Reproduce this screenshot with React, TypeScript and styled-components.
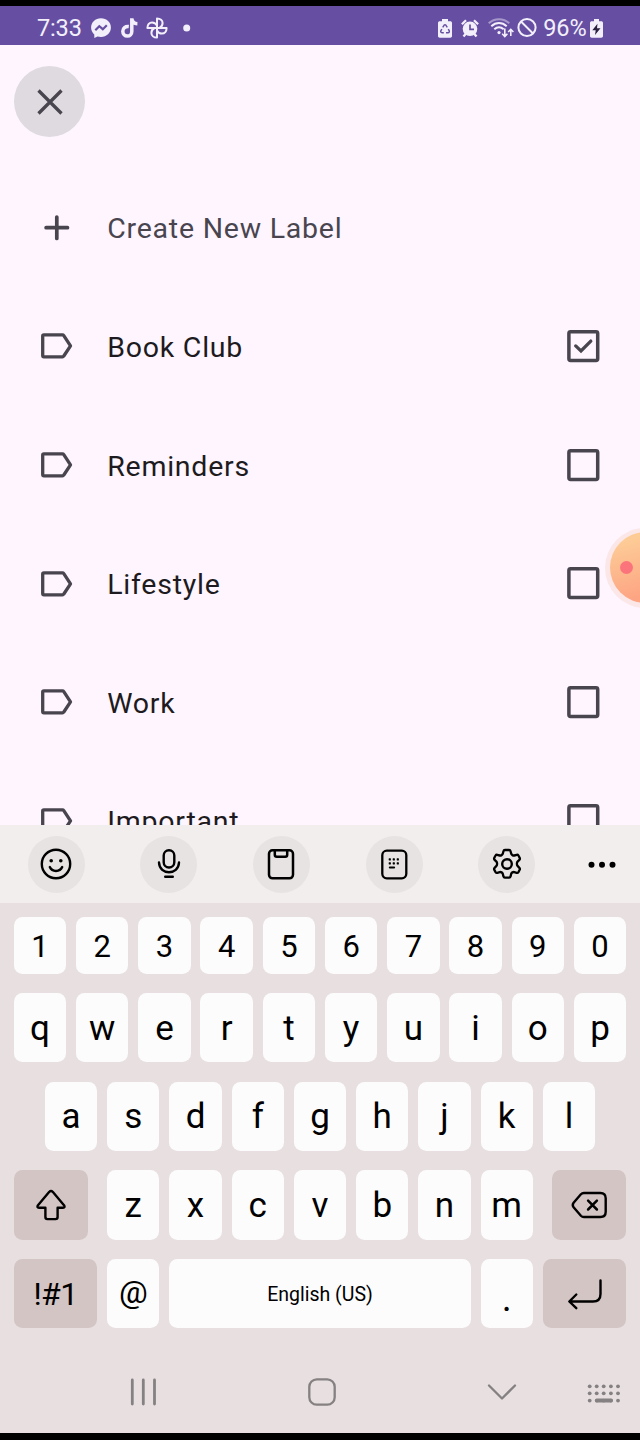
import React from "react";
import styled, { createGlobalStyle } from "styled-components";

const GlobalStyle = createGlobalStyle`
  * { box-sizing: border-box; }
  body { margin: 0; background: #000; }
  svg { display: block; flex: none; overflow: visible; }
`;

const Phone = styled.div`
  width: 640px;
  height: 1440px;
  padding: 6px 0 7px;
  display: flex;
  flex-direction: column;
  background: #000;
  font-family: Roboto, "Liberation Sans", sans-serif;
  overflow: hidden;
`;

const StatusBar = styled.header`
  height: 39px;
  flex: none;
  padding: 5px 36.7px 0 37px;
  display: flex;
  align-items: center;
  justify-content: space-between;
  background: #664fa3;
  color: #f3effa;
`;

const StatusGroup = styled.div`
  display: flex;
  align-items: center;
`;

const Space = styled.span<{ $w: number }>`
  width: ${(p) => p.$w}px;
`;

const StatusText = styled.span<{ $width: number }>`
  width: ${(p) => p.$width}px;
  font-size: 23.5px;
  line-height: 28px;
  letter-spacing: -0.15px;
  white-space: nowrap;
`;

const Screen = styled.main`
  position: relative;
  height: 780px;
  flex: none;
  background: #fef5ff;
  overflow: hidden;
`;

const TopBar = styled.div`
  height: 123.6px;
  padding: 21.2px 14.3px;
`;

const CloseButton = styled.button`
  width: 71px;
  height: 71px;
  padding: 0;
  border: 0;
  border-radius: 50%;
  display: grid;
  place-items: center;
  background: #dedadf;
`;

const Row = styled.div`
  height: 118.6px;
  padding: 0 40px;
  display: flex;
  align-items: center;
`;

const RowIcon = styled.div`
  width: 67.2px;
  display: flex;
`;

const RowText = styled.span<{ $muted?: boolean }>`
  flex: 1;
  padding-top: 3px;
  font-size: 28.5px;
  line-height: 42px;
  letter-spacing: 0.77px;
  color: ${(p) => (p.$muted ? "#49454f" : "#1d1b20")};
`;

const Bubble = styled.div`
  position: absolute;
  left: 605px;
  top: 482.5px;
  width: 80px;
  height: 80px;
  border-radius: 50%;
  background: #fbe7e8;
  padding: 4.5px;
`;

const BubbleFace = styled.div`
  height: 100%;
  border-radius: 50%;
  background: linear-gradient(165deg, #fdcb96 15%, #fda583 80%);
  display: flex;
  align-items: center;
  padding-left: 10.7px;
`;

const BubbleDot = styled.span`
  width: 13px;
  height: 13px;
  border-radius: 50%;
  background: #fb747c;
`;

const Toolbar = styled.div`
  height: 78px;
  flex: none;
  padding: 0 24.5px 0 27.8px;
  display: flex;
  align-items: center;
  background: #f3eeee;
`;

const ToolButton = styled.button`
  width: 57px;
  height: 57px;
  flex: none;
  margin: 0;
  padding: 0;
  border: 0;
  border-radius: 50%;
  display: grid;
  place-items: center;
  background: #e8e3e3;
  color: #000;

  & + & {
    margin-left: 55.6px;
  }
`;

const More = styled.svg`
  margin-left: auto;
`;

const Keyboard = styled.div`
  height: 530px;
  flex: none;
  padding: 14px 13.7px 0;
  display: flex;
  flex-direction: column;
  background: #e8dfe0;
`;

const KeyRow = styled.div<{ $h?: number }>`
  height: ${(p) => p.$h ?? 69.3}px;
  margin-bottom: 19.3px;
  flex: none;
  display: flex;
  justify-content: center;
  gap: 9.85px;
`;

const Key = styled.button<{ $w?: number; $dark?: boolean; $size?: number; $drop?: number; $lift?: number; $track?: number }>`
  width: ${(p) => p.$w ?? 52.4}px;
  height: 100%;
  padding: ${(p) => p.$drop ?? 0}px 0 ${(p) => p.$lift ?? 0}px;
  border: 0;
  border-radius: 8.5px;
  display: flex;
  align-items: center;
  justify-content: center;
  background: ${(p) => (p.$dark ? "#d3c5c3" : "#fcfcfc")};
  color: #000;
  font-family: inherit;
  font-size: ${(p) => p.$size ?? 35}px;
  letter-spacing: ${(p) => p.$track ?? 0}px;
  line-height: 40px;
`;

const Gap = styled.span`
  width: 9px;
  margin-right: -9.85px;
`;

const NavBar = styled.nav`
  height: 60px;
  margin: 14px -13.7px 0;
  padding-left: 117px;
  display: flex;
  align-items: center;
  color: #858182;
`;

const line = {
  fill: "none",
  stroke: "currentColor",
  strokeLinecap: "round" as const,
  strokeLinejoin: "round" as const,
};

const Messenger = () => (
  <svg width="20" height="21" viewBox="0 0 20 21">
    <path fill="#f3effa" d="M10 .3C4.400.3.1 4.400.1 9.600c0 2.800 1.200 5.200 3.200 6.900v3.600l3.200-1.600c1.100.3 2.300.5 3.500.5 5.600 0 9.900-4 9.900-9.400S15.600.3 10 .3Z" />
    <path fill="none" stroke="#664fa3" strokeWidth="2.200" d="m4.300 12.200 4-4 3.500 3 4-4" />
  </svg>
);

const TikTok = () => (
  <svg width="17" height="20" viewBox="0 0 17 20">
    <path fill="none" stroke="#f3effa" strokeWidth="3.500" d="M7.800 8.600c-3.500-.4-6 1.600-6 4.700 0 2.700 2 4.700 4.500 4.700 2.700 0 4.500-2 4.500-4.600V.2M10.800.5c.3 3 2.300 5.200 5.600 5.300" />
  </svg>
);

const Pinwheel = () => (
  <svg width="22" height="22" viewBox="-11 -11 22 22">
    {[0, 90, 180, 270].map((a) => (
      <path key={a} transform={`rotate(${a})`} fill="none" stroke="#f3effa" strokeWidth="2" strokeLinejoin="round" d="M0 0V-9.600C3.300-9.600 5.600-7.600 5.600-4.900 5.600-2.800 4.500-1 2.500 0" />
    ))}
  </svg>
);

const RecycleBattery = () => (
  <svg width="14" height="19" viewBox="0 0 14 19">
    <path fill="#f3effa" d="M4 0h6v2.300h2.300c.9 0 1.700.7 1.700 1.600V17c0 1-.8 1.700-1.700 1.700H1.700C.8 18.700 0 18 0 17V3.900c0-.9.800-1.600 1.700-1.600H4Z" />
    <path fill="none" stroke="#664fa3" strokeWidth="1.500" d="m4.700 8.300 1.500-2.200q.8-.9 1.600 0l1.500 2.200M10.300 10.200l1 1.800q.3 1.700-1.300 1.800H8M5.800 13.800H4q-1.600-.3-1.200-1.800l1-1.800" />
  </svg>
);

const Alarm = () => (
  <svg width="18" height="19" viewBox="0 0 18 19">
    <circle cx="9" cy="9.800" r="7.300" fill="#f3effa" />
    <path fill="none" stroke="#f3effa" strokeWidth="2.300" d="M.9 5.200 5 1.200M17.100 5.200 13 1.200M2.500 17.600l2.500-3M15.500 17.600l-2.500-3" />
    <path fill="none" stroke="#664fa3" strokeWidth="1.700" d="M9 5.500v4.900h4" />
  </svg>
);

const Wifi = () => (
  <svg width="26" height="20" viewBox="0 0 26 20">
    <g fill="none" stroke="#f3effa" strokeWidth="2">
      <path opacity=".45" d="M.7 5.300C6.500-.2 15.500-.2 21.300 5.300" />
      <path d="M3.300 8.300C8 4 14 4 18.700 8.300M6.300 11.300c2.900-2.500 6.500-2.500 9.400 0" />
      <path strokeWidth="1.600" d="M16.800 10.500v7.800M14.200 15.800l2.600 2.700 2.600-2.700M22.800 18v-6.500M20.200 14l2.600-2.700 2.600 2.700" />
    </g>
    <circle cx="11" cy="14.600" r="1.600" fill="#f3effa" />
  </svg>
);

const Blocked = () => (
  <svg width="20" height="20" viewBox="0 0 20 20">
    <circle cx="10" cy="9.500" r="8.600" fill="none" stroke="#f3effa" strokeWidth="2" />
    <path stroke="#f3effa" strokeWidth="2" d="m4 3.500 12 12" />
  </svg>
);

const ChargingBattery = () => (
  <svg width="13" height="19" viewBox="0 0 13 19">
    <path fill="#f3effa" d="M4 0h5v2.300h2.300c.9 0 1.700.7 1.700 1.600V17c0 1-.8 1.700-1.700 1.700H1.700C.8 18.700 0 18 0 17V3.900c0-.9.800-1.600 1.700-1.600H4Z" />
    <path fill="#2a2140" d="M7.500 4.700 2.300 11.200h3.400L5 16l5.500-6.700H7Z" />
  </svg>
);

const Label = () => (
  <svg width="33" height="26" viewBox="0 0 33 26">
    <path fill="none" stroke="#49454f" strokeWidth="3.300" strokeLinejoin="round" d="M3.900 1.900h18.600q.8 0 1.300.7l6.700 10.200-6.700 10.200q-.5.800-1.300.8H3.900q-1.200 0-1.200-1.200V3.100q0-1.200 1.200-1.200Z" />
  </svg>
);

const Check = ({ on }: { on?: boolean }) => (
  <svg width="33" height="33" viewBox="0 0 33 33">
    <rect x="1.900" y="1.700" width="28.800" height="28.800" rx="1.700" fill="none" stroke="#49454f" strokeWidth="3.500" />
    {on && <path fill="none" stroke="#49454f" strokeWidth="3.300" strokeLinecap="round" d="m8.700 15.900 5.300 5 9.800-9.800" />}
  </svg>
);

const labels = ["Book Club", "Reminders", "Lifestyle", "Work", "Important"];

export default function App() {
  return (
    <>
      <GlobalStyle />
      <Phone>
        <StatusBar>
          <StatusGroup>
            <StatusText $width={54}>7:33</StatusText>
            <Messenger />
            <Space $w={10} />
            <TikTok />
            <Space $w={8} />
            <Pinwheel />
            <svg width="24" height="8" viewBox="0 0 24 8">
              <circle cx="18.700" cy="4" r="3.500" fill="#f3effa" />
            </svg>
          </StatusGroup>
          <StatusGroup>
            <RecycleBattery />
            <Space $w={9.5} />
            <Alarm />
            <Space $w={8.5} />
            <Wifi />
            <Space $w={3.5} />
            <Blocked />
            <Space $w={6} />
            <StatusText $width={47}>96%</StatusText>
            <ChargingBattery />
          </StatusGroup>
        </StatusBar>

        <Screen>
          <TopBar>
            <CloseButton aria-label="Close">
              <svg width="26" height="26" viewBox="0 0 26 26">
                <path stroke="#49454f" strokeWidth="3.300" d="m1.500 1.500 23 23m0-23-23 23" />
              </svg>
            </CloseButton>
          </TopBar>
          <Row>
            <RowIcon>
              <svg width="33" height="26" viewBox="0 0 33 26">
                <path stroke="#49454f" strokeWidth="3.700" strokeLinecap="round" d="M16.800 2v21.400M6.100 12.700h21.400" />
              </svg>
            </RowIcon>
            <RowText $muted>Create New Label</RowText>
          </Row>
          {labels.map((name, i) => (
            <Row key={name}>
              <RowIcon>
                <Label />
              </RowIcon>
              <RowText>{name}</RowText>
              <Check on={i === 0} />
            </Row>
          ))}
          <Bubble>
            <BubbleFace>
              <BubbleDot />
            </BubbleFace>
          </Bubble>
        </Screen>

        <Toolbar>
          <ToolButton aria-label="Emoji">
            <svg width="32" height="32" viewBox="-16 -16 32 32">
              <g {...line} strokeWidth="2.400">
                <circle r="14.200" />
                <path d="M-6.200 3.100C-4 8.200 4 8.200 6.200 3.100" />
              </g>
              <circle cx="-4.800" cy="-3.300" r="1.800" />
              <circle cx="4.800" cy="-3.300" r="1.800" />
            </svg>
          </ToolButton>
          <ToolButton aria-label="Voice input">
            <svg width="32" height="32" viewBox="-16 -16 32 32">
              <g {...line} strokeWidth="2.400">
                <rect x="-5.300" y="-13.700" width="10.600" height="17.200" rx="5.200" />
                <path d="M-10-1.500C-9.500 11.500 9.500 11.500 10-1.500M-3.800 12.800h7.600" />
              </g>
            </svg>
          </ToolButton>
          <ToolButton aria-label="Clipboard">
            <svg width="32" height="32" viewBox="-16 -16 32 32">
              <g {...line} strokeWidth="2.500">
                <rect x="-12" y="-13.700" width="24" height="28" rx="3.500" />
                <path d="M-6.200-13.500v4.200q0 2 2 2h8.400q2 0 2-2v-4.200" />
              </g>
            </svg>
          </ToolButton>
          <ToolButton aria-label="Keyboard layouts">
            <svg width="32" height="32" viewBox="-16 -15.300 32 32">
              <rect {...line} strokeWidth="2.300" x="-11.700" y="-12.600" width="24" height="27.600" rx="4.500" />
              {[-4.3, -0.3, 3.7].map((x) =>
                [-4, 0].map((y) => <rect key={`${x}${y}`} x={x - 1} y={y - 1} width="2.200" height="2.200" rx=".4" />)
              )}
              <path {...line} strokeWidth="2" d="M-4.200 4.200h4.300" />
            </svg>
          </ToolButton>
          <ToolButton aria-label="Settings">
            <svg width="32" height="32" viewBox="-16 -16 32 32">
              <g {...line} strokeWidth="2.400">
                <path transform="scale(.96 1)" d="M-2.200-14h4.400q1.200 0 1.500 1.200l.7 2.600q.4.900 1.300 1.400t1.900.3l2.500-.7q1.200-.3 1.800.7l1.300 2.300q.6 1.100-.3 2l-1.900 1.900q-.7.700-.7 2.100t.7 2.100l1.900 1.900q.9.900.3 2l-1.300 2.300q-.6 1-1.800.7l-2.500-.7q-1-.2-1.900.3t-1.300 1.400l-.7 2.600q-.3 1.200-1.500 1.200h-4.400q-1.200 0-1.500-1.200l-.7-2.600q-.4-.9-1.300-1.400t-1.900-.3l-2.500.7q-1.200.3-1.800-.7l-1.300-2.300q-.6-1.100.3-2l1.900-1.900q.7-.7.700-2.100t-.7-2.100l-1.900-1.900q-.9-.9-.3-2l1.300-2.300q.6-1 1.800-.7l2.500.7q1 .2 1.900-.3t1.300-1.400l.7-2.600q.3-1.200 1.500-1.200Z" />
                <circle r="4.800" />
              </g>
            </svg>
          </ToolButton>
          <More width="28" height="8" viewBox="0 0 28 8">
            {[3.5, 14, 24.5].map((x) => (
              <circle key={x} cx={x} cy="4.700" r="3" />
            ))}
          </More>
        </Toolbar>

        <Keyboard>
          <KeyRow $h={56.9}>
            {[..."1234567890"].map((k) => (
              <Key key={k} $size={31} $drop={3}>{k}</Key>
            ))}
          </KeyRow>
          <KeyRow>
            {[..."qwertyuiop"].map((k) => (
              <Key key={k} $drop={2}>{k}</Key>
            ))}
          </KeyRow>
          <KeyRow>
            {[..."asdfghjkl"].map((k) => (
              <Key key={k} $drop={2}>{k}</Key>
            ))}
          </KeyRow>
          <KeyRow>
            <Key $w={74.5} $dark aria-label="Shift">
              <svg width="32" height="32" viewBox="-16 -16 32 32">
                <path {...line} strokeWidth="2.400" d="M-1.900-13q1.900-1.900 3.800 0L13 .2q1.500 2.500-1 2.500H6.600v9.400q0 2-2 2h-8.200q-2 0-2-2V2.700H-12q-2.500 0-1-2.500Z" />
              </svg>
            </Key>
            <Gap />
            {[..."zxcvbnm"].map((k) => (
              <Key key={k} $drop={2}>{k}</Key>
            ))}
            <Gap />
            <Key $w={74.5} $dark aria-label="Backspace">
              <svg width="36" height="28" viewBox="-.4 0 36 28">
                <path {...line} strokeWidth="2.400" d="M12.500 2H29q5.300 0 5.300 5.300v13.400Q34.300 26 29 26H12.500q-1.800 0-3-1.300L2.200 16.200q-1.700-2.200 0-4.400L9.500 3.300Q10.700 2 12.500 2Z" />
                <path {...line} strokeWidth="2.500" d="m16.700 9.700 8.800 8.800m0-8.800-8.800 8.800" />
              </svg>
            </Key>
          </KeyRow>
          <KeyRow>
            <Key $w={83.5} $dark $size={32} $track={-0.6} $drop={1}>!#1</Key>
            <Key $size={32} $lift={3}>@</Key>
            <Key $w={301.4} $size={19.5} $drop={3}>English (US)</Key>
            <Key $size={38} $drop={9}>.</Key>
            <Key $w={83.5} $dark aria-label="Enter">
              <svg width="34" height="30" viewBox="0 0 34 30">
                <path {...line} strokeWidth="2.400" d="M32.500 1.500V15q0 7.500-7.500 7.500H1.800M8.300 15.500l-7 7 7 6.700" />
              </svg>
            </Key>
          </KeyRow>
          <NavBar>
            <svg width="53" height="28" viewBox="0 0 53 28">
              <path {...line} strokeWidth="2.800" d="M15.300 2v24M26.300 2v24M37.500 2v24" />
            </svg>
            <Space $w={138.3} />
            <svg width="28" height="28" viewBox="0 0 28 28">
              <rect {...line} strokeWidth="2.300" x="1.300" y="1.300" width="25.400" height="25.400" rx="7.500" />
            </svg>
            <Space $w={151.5} />
            <svg width="28" height="16" viewBox="0 0 28 16">
              <path {...line} strokeWidth="2.300" d="m1 1.500 13 13 13-13" />
            </svg>
            <Space $w={56.2} />
            <svg width="64" height="18" viewBox="0 0 64 18">
              {[17.7, 24.7, 31.7, 38.9, 46].map((x) =>
                [2, 9, 16.3].map((y) => <circle key={`${x}-${y}`} cx={x} cy={y + 1.3} r="1.900" fill="currentColor" />)
              )}
              <path {...line} strokeWidth="4" d="M25 17.600h14" />
            </svg>
          </NavBar>
        </Keyboard>
      </Phone>
    </>
  );
}
